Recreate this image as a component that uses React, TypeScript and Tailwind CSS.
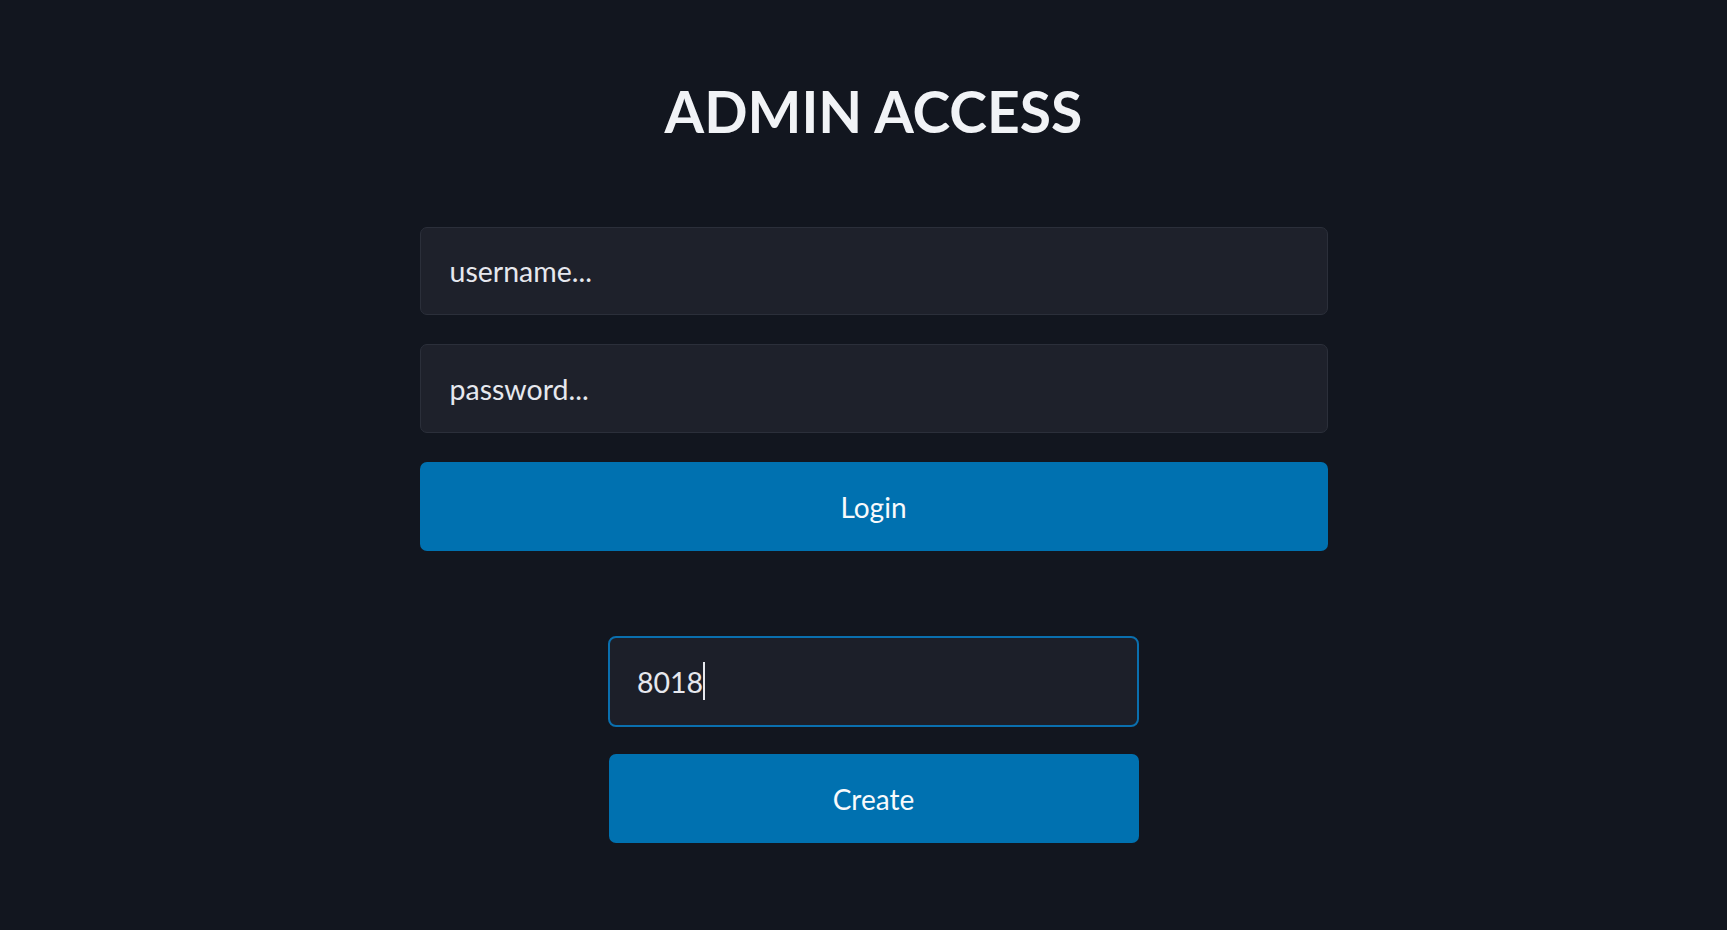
import { useEffect, useRef } from "react";

function App() {
  const codeRef = useRef<HTMLInputElement>(null);

  useEffect(() => {
    const el = codeRef.current;
    if (el) {
      el.focus();
      el.setSelectionRange(4, 4);
    }
  }, []);

  return (
    <main className="min-h-screen w-full bg-[#12161f] pl-[20px] font-['Lato',sans-serif] flex flex-col items-center">
      <h1 className="mt-[82px] text-[57px] leading-[58px] font-bold text-[#f1f3f6]">
        ADMIN ACCESS
      </h1>

      <form
        className="mt-[87px] w-[908px] flex flex-col gap-[29px]"
        onSubmit={(e) => e.preventDefault()}
      >
        <input
          type="text"
          placeholder="username..."
          className="h-[88px] w-full rounded-[7px] border border-[#2b2f3a] bg-[#1e212b] pl-[29px] text-[28.5px] text-[#e6e8ee] placeholder:text-[#e6e8ee] outline-none"
        />
        <input
          type="password"
          placeholder="password..."
          className="h-[89px] w-full rounded-[7px] border border-[#2b2f3a] bg-[#1e212b] pl-[29px] text-[28.5px] text-[#e6e8ee] placeholder:text-[#e6e8ee] outline-none"
        />
        <button
          type="submit"
          className="h-[89px] w-full rounded-[7px] bg-[#0071b0] text-[28px] text-[#f8fafc]"
        >
          Login
        </button>
      </form>

      <div className="mt-[85px] flex flex-col items-center gap-[27px]">
        <div className="relative">
          <input
            ref={codeRef}
            type="text"
            defaultValue="8018"
            className="h-[91px] w-[531px] rounded-[8px] border-2 border-[#0a6fae] bg-[#1c1f29] pl-[27px] text-[28.5px] text-[#e6e8ee] caret-transparent outline-none"
          />
          {/* caret drawn by hand so it shows in the still */}
          <span className="absolute left-[95px] top-[26px] h-[38px] w-[1.5px] bg-[#e6e8ee]" />
        </div>
        <button
          type="button"
          className="h-[89px] w-[530px] rounded-[7px] bg-[#0071b0] text-[28px] text-[#f8fafc]"
        >
          Create
        </button>
      </div>
    </main>
  );
}

export default App;
